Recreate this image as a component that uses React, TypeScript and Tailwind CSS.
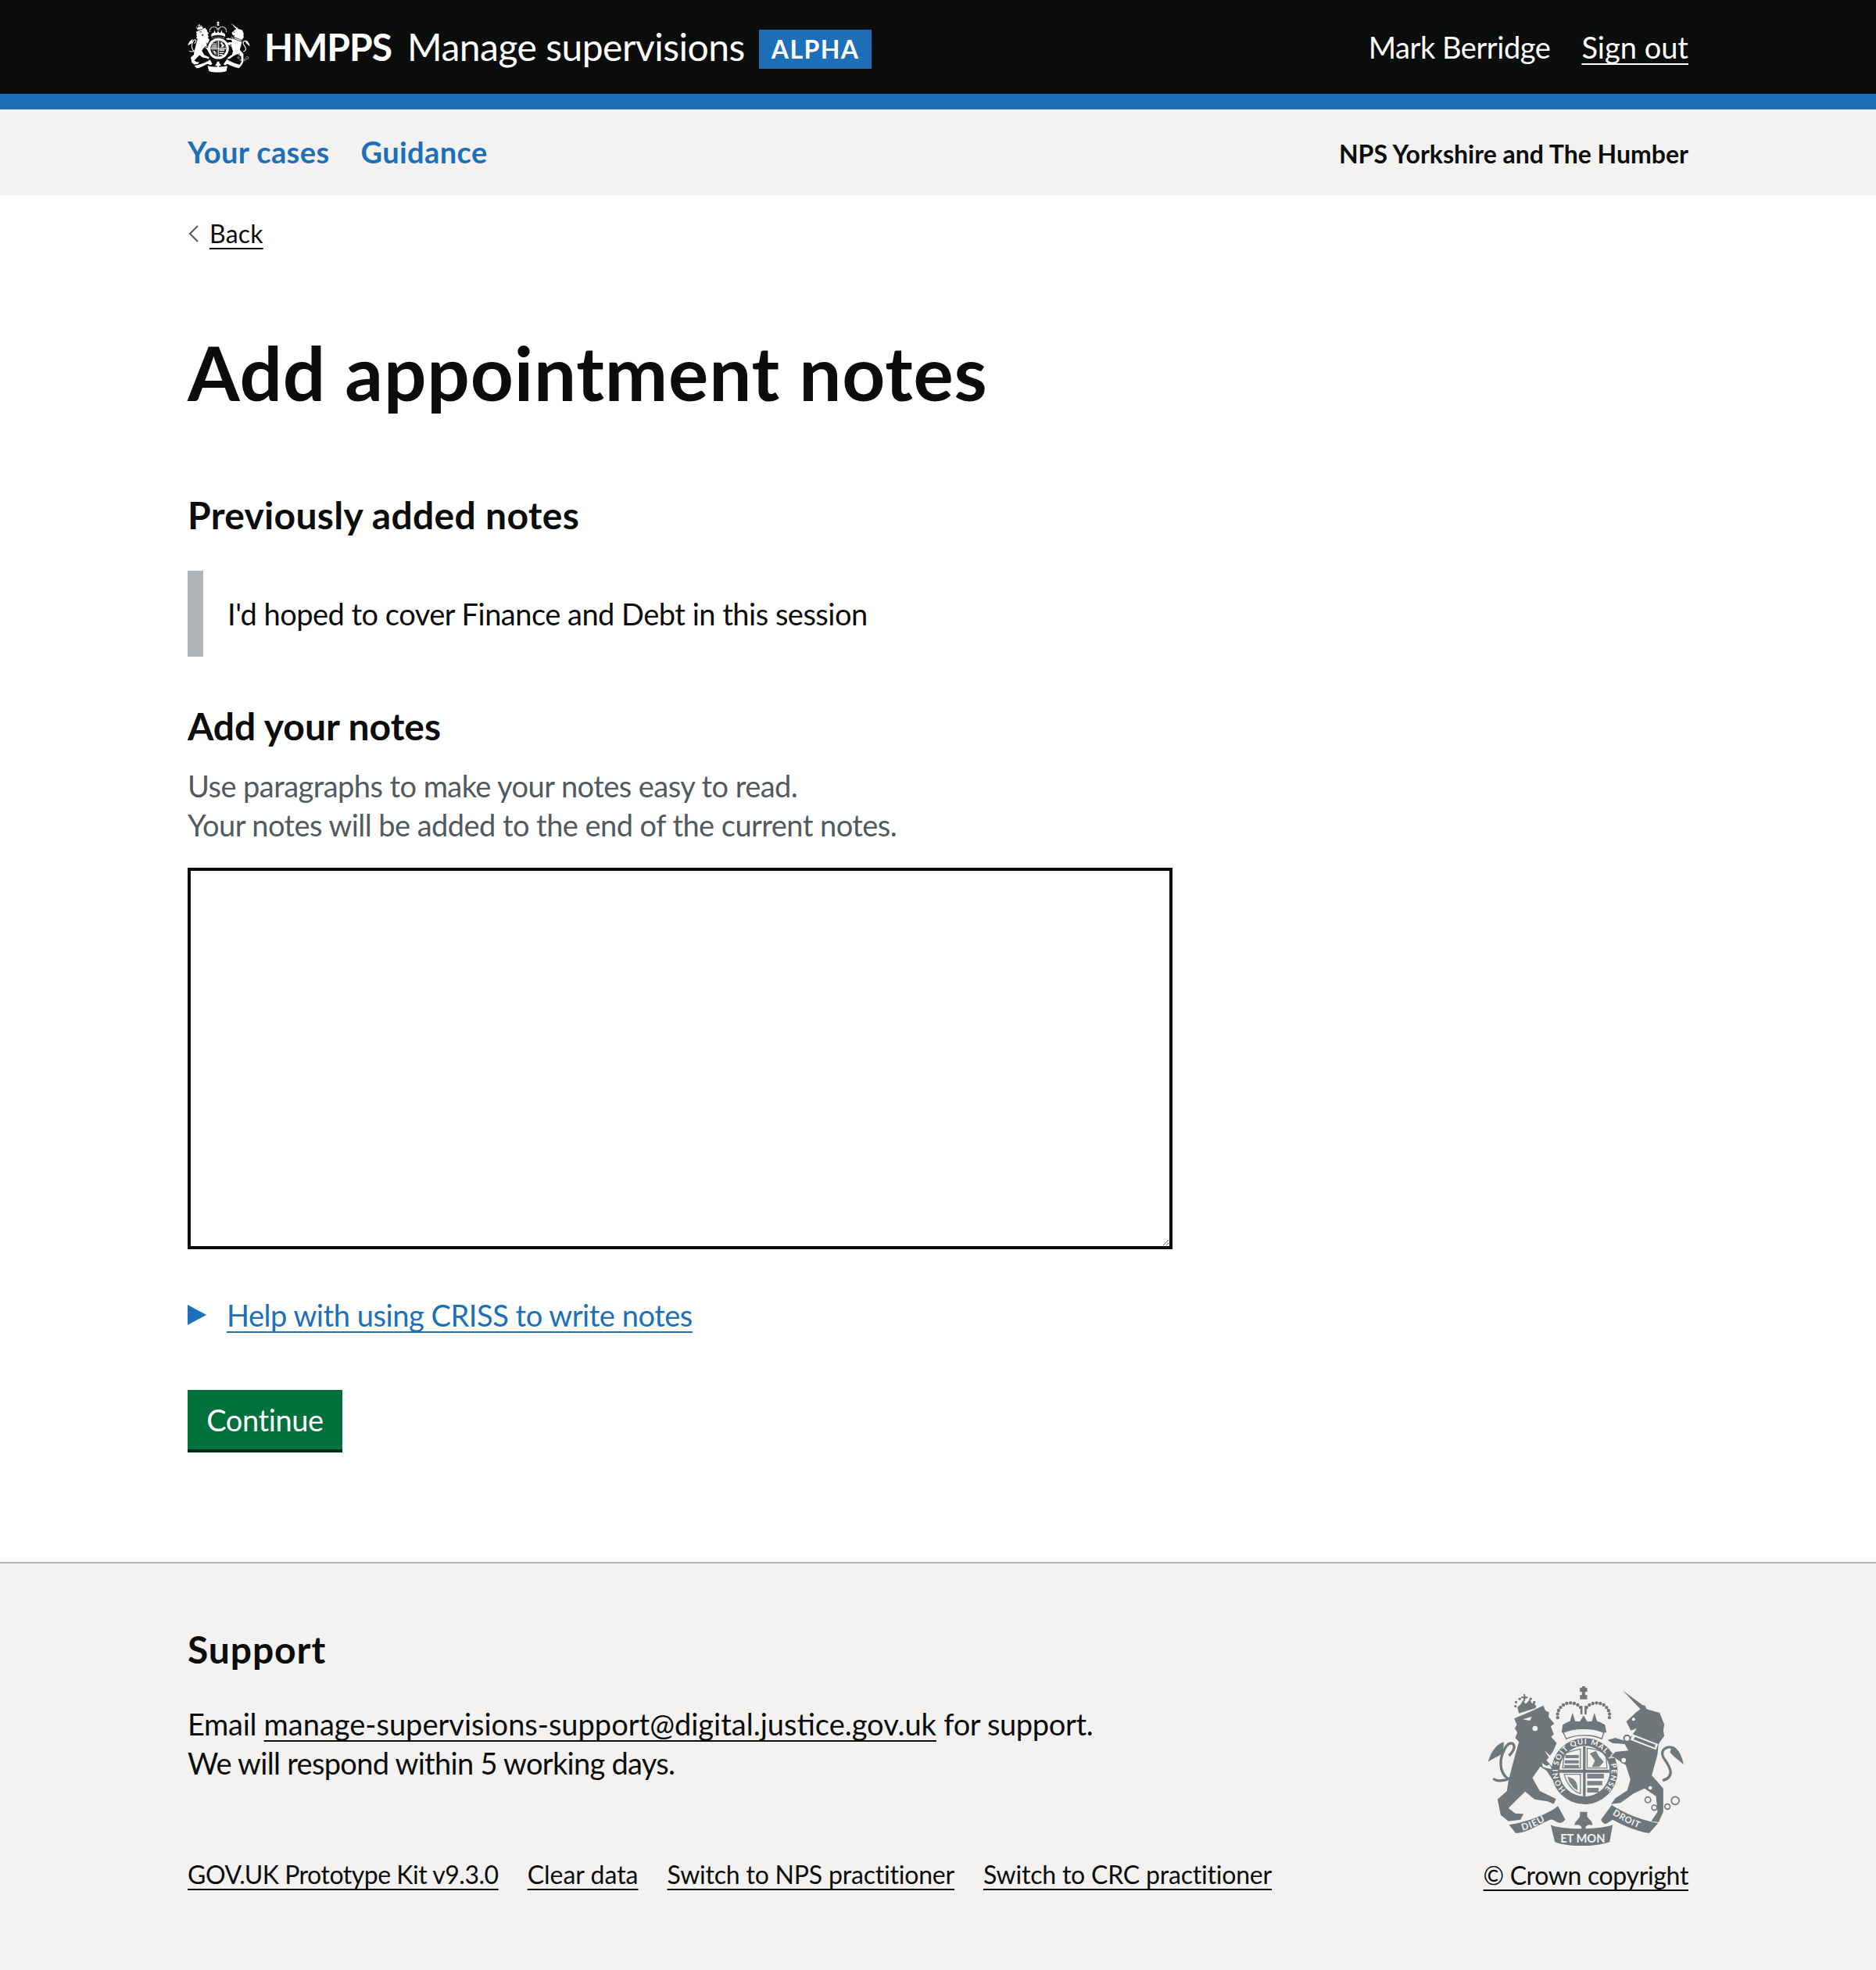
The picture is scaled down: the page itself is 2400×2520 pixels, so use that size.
import React from "react";

const font = "font-['Lato',sans-serif]";
const line = "underline decoration-2 underline-offset-[6px] [text-decoration-skip-ink:none]";

function arch(cx: number, cy: number, rx: number, ry: number, from: number, to: number, n: number) {
  const out: number[][] = [];
  for (let i = 0; i <= n; i++) {
    const a = ((from + ((to - from) * i) / n) * Math.PI) / 180;
    out.push([cx + rx * Math.cos(a), cy + ry * Math.sin(a)]);
  }
  return out;
}

function Crest({ className, fill, bg, text = true }: { className: string; fill: string; bg: string; text?: boolean }) {
  const crownDots = [...arch(388, 190, 50, 48, 170, 320, 9), ...arch(488, 190, 50, 48, 220, 370, 9)];
  const lionDots = arch(214, 150, 38, 28, 170, 370, 6);
  return (
    <svg viewBox="70 78 755 612" className={className} role="img" aria-label="Royal coat of arms">
      <g fill={fill}>
        {/* lion crown */}
        <path d="M184 158 L196 148 L206 132 L216 146 L232 128 L240 144 L250 140 L254 162 L190 182 Z" />
        <path d="M198 118 H208 V108 H214 V118 H224 V124 H214 V136 H208 V124 H198 Z" />
        {lionDots.map(([x, y], i) => <circle key={i} cx={x} cy={y} r="5" />)}
        {/* lion */}
        <path d="M172 202 L232 176 L284 152 L292 172 L306 178 L304 196 L326 222 L312 232 L324 262 L314 272 L335 296 L320 330 L296 362 L322 392 L336 424 L320 438 L296 402 L272 386 L242 430 L270 480 L332 510 L324 530 L300 520 L250 512 L214 482 L176 520 L150 546 L176 566 L208 568 L196 590 L150 596 L120 572 L108 512 L144 480 L150 440 L168 370 L190 292 L176 276 L184 256 L174 240 L182 226 Z" />
        <circle cx="252" cy="240" r="10" fill={bg} />
        <path d="M205 205 L240 195 L232 210 Z" fill={bg} />
        <path d="M288 325 L330 362 L320 374 Z" fill={bg} />
        <path d="M278 372 L296 384 L308 378 L316 396 L296 392 L282 388 Z" fill={bg} />
        {/* unicorn */}
        <path d="M588 94 L664 150 L674 152 L680 166 L700 172 L730 180 L748 225 L744 250 L748 268 L726 300 L722 340 L700 420 L744 470 L744 560 L726 600 L698 596 L722 560 L716 500 L672 470 L630 490 L580 526 L544 530 L560 508 L606 478 L618 436 L600 380 L546 345 L560 330 L610 325 L596 300 L548 296 L530 284 L560 276 L604 290 L628 262 L642 240 L620 248 L602 214 L640 178 L656 166 Z" />
        <circle cx="605" cy="278" r="12" fill={bg} stroke={fill} strokeWidth="6" />
        <circle cx="592" cy="362" r="11" fill={bg} stroke={fill} strokeWidth="5" />
        <path d="M626 262 L724 300 L716 322 L618 284 Z" fill={bg} />
        <path d="M636 272 L714 302 L712 314 L630 282 Z" />
        <circle cx="720" cy="432" r="7" fill={bg} />
        <circle cx="694" cy="468" r="7" fill={bg} />
        <circle cx="630" cy="205" r="6" fill={bg} />
        {/* crown */}
        <path d="M424 84 H432 V78 H444 V84 H452 V100 H444 V112 H452 V128 H424 V112 H432 V100 H424 Z" />
        <path d="M426 154 H434 V186 H426 Z M442 154 H450 V186 H442 Z" />
        <path d="M358 226 L376 216 L386 212 L396 180 L406 212 L424 214 L438 190 L452 214 L470 212 L480 180 L490 212 L502 216 L520 226 L526 256 H354 Z" />
        {crownDots.map(([x, y], i) => <circle key={i} cx={x} cy={y} r="6.5" />)}
        {/* shield */}
        <circle cx="442" cy="404" r="127" />
        <circle cx="442" cy="404" r="97" fill={bg} />
        <g opacity=".9">
          <path d="M364 335 L426 318 V392 H358 Z" fill="none" stroke={fill} strokeWidth="4" />
          <path d="M368 342 H420 V354 H368 Z M366 362 H420 V374 H366 Z M364 380 H420 V390 H364 Z" />
          <path d="M452 316 C 478 318 510 326 524 342 L528 392 H452 Z" fill="none" stroke={fill} strokeWidth="4" />
          <path d="M462 336 L486 326 L496 346 L516 368 L498 388 L470 388 L482 364 Z" />
          <path d="M364 416 H426 V490 C 396 482 372 450 364 416 Z" fill="none" stroke={fill} strokeWidth="4" />
          <path d="M376 426 C 404 428 418 450 414 478 L400 468 L384 446 Z" />
          <path d="M452 414 H516 V432 H452 Z M452 442 H510 V458 H452 Z M452 468 H496 V486 H452 Z" />
        </g>
        <path d="M436 308 H446 V500 H436 Z M345 398 H538 V410 H345 Z" />
        <path d="M360 256 C 400 236 480 236 516 256 L 508 280 C 470 262 410 262 372 280 Z" fill={bg} stroke={fill} strokeWidth="4" />
        {/* fleur */}
        <path d="M424 560 H452 V578 C 462 592 472 596 472 612 C 460 608 452 610 446 618 L 446 640 L 430 640 L 430 618 C 424 610 416 608 404 612 C 404 596 416 592 424 578 Z" />
        {/* tails */}
        <path d="M168 425 C 140 442 104 446 92 432 M150 435 C 108 405 118 350 135 320 C 145 295 170 288 172 310 C 172 325 162 335 152 345" fill="none" stroke={fill} strokeWidth="10" />
        <path d="M132 292 C 96 304 80 340 72 368 C 94 352 116 346 130 332 Z" />
        <path d="M742 440 C 792 424 770 388 745 352 C 728 322 760 302 788 318" fill="none" stroke={fill} strokeWidth="10" />
        <path d="M776 308 C 800 312 814 340 822 378 C 804 362 786 350 770 332 Z" />
        {/* chain */}
        {[[685, 514, 11], [710, 544, 10], [760, 540, 10], [790, 517, 15]].map(([x, y, r]) => (
          <circle key={x} cx={x} cy={y} r={r} fill="none" stroke={fill} strokeWidth="5" />
        ))}
        {/* ribbons */}
        <path d="M152 610 C 220 600 300 570 340 538 L 368 590 C 340 620 330 585 310 590 C 260 612 220 640 178 642 Z" />
        <path d="M546 534 C 590 562 650 590 724 604 L 690 642 C 640 634 590 612 550 590 C 530 600 520 620 505 590 Z" />
        <path d="M312 610 C 350 630 500 630 550 610 L 538 676 C 480 696 380 696 328 676 Z" />
      </g>
      {text && (
        <g fill={bg} fontFamily="Lato, sans-serif" fontWeight="700">
          <defs>
            <path id="ring" d="M 370 476 A 103 103 0 1 1 515 476" />
            <path id="dieu" d="M 204 632 C 245 622 285 600 318 578" />
            <path id="droit" d="M 548 570 C 585 593 625 614 668 630" />
          </defs>
          <text fontSize="29" textLength="480"><textPath href="#ring">HONI SOIT QUI MAL Y PENSE</textPath></text>
          <text fontSize="36" letterSpacing="3"><textPath href="#dieu">DIEU</textPath></text>
          <text fontSize="34" letterSpacing="2"><textPath href="#droit">DROIT</textPath></text>
          <text x="349" y="677" fontSize="44">ET MON</text>
        </g>
      )}
    </svg>
  );
}

export default function App() {
  return (
    <div className={`${font} min-h-[2520px] flex flex-col bg-white text-[#0b0c0c] text-[38px] leading-[50px]`}>
      <header className="h-[140px] bg-[#0b0c0c] border-b-[20px] border-[#1d70b8] text-white">
        <div className="w-[1920px] mx-auto h-full flex items-center justify-between">
          <div className="flex items-center">
            <Crest className="w-[80px] h-[70px] mr-[18px]" fill="#ffffff" bg="#0b0c0c" text={false} />
            <span className="font-bold text-[48px] mr-[20px] tracking-[-1px]">HMPPS</span>
            <span className="text-[48px] mr-[18px] tracking-[-0.5px]">Manage supervisions</span>
            <span className="mt-[6px] bg-[#1d70b8] font-bold text-[32px] leading-[50px] h-[50px] px-[16px] tracking-[1.4px]">ALPHA</span>
          </div>
          <div className="flex items-center gap-[40px]">
            <span className="tracking-[-0.45px]">Mark Berridge</span>
            <a className={line}>Sign out</a>
          </div>
        </div>
      </header>

      <nav className="h-[110px] bg-[#f3f2f1]">
        <div className="w-[1920px] mx-auto h-full flex items-center justify-between">
          <div className="flex gap-[40px] font-bold text-[#1d70b8] tracking-[0.4px] mt-[-3px]">
            <a>Your cases</a>
            <a>Guidance</a>
          </div>
          <div className="font-bold text-[32px] mt-[3px]">NPS Yorkshire and The Humber</div>
        </div>
      </nav>

      <main className="w-[1920px] mx-auto grow">
        <div className="mt-[29px] flex items-center h-[40px] text-[32px]">
          <svg viewBox="0 0 16 24" className="w-[16px] h-[24px] mr-[12px]" fill="none" stroke="#505a5f" strokeWidth="2">
            <path d="M13 2 L3 12 L13 22" />
          </svg>
          <a className={`${line} tracking-[0.2px]`}>Back</a>
        </div>

        <h1 className="mt-[107px] font-bold text-[96px] leading-[100px] tracking-[0.85px]">Add appointment notes</h1>

        <h2 className="mt-[103px] font-bold text-[48px] leading-[60px] tracking-[0.3px]">Previously added notes</h2>

        <div className="mt-[41px] border-l-[20px] border-[#b1b4b6] pl-[31px] py-[30px] tracking-[-0.5px]">I'd hoped to cover Finance and Debt in this session</div>

        <h2 className="mt-[59px] font-bold text-[48px] leading-[60px]">Add your notes</h2>
        <p className="mt-[21px] text-[#505a5f] tracking-[-0.55px]">
          Use paragraphs to make your notes easy to read.
          <br />
          Your notes will be added to the end of the current notes.
        </p>

        <textarea className="block mt-[30px] w-[1260px] h-[488px] border-4 border-[#0b0c0c] bg-white" />

        <details className="mt-[59px]">
          <summary className="flex items-center list-none text-[#1d70b8]">
            <svg viewBox="0 0 24 26" className="w-[24px] h-[26px] mr-[26px]" fill="#1d70b8">
              <path d="M0 0 L24 13 L0 26 Z" />
            </svg>
            <span className={`${line} tracking-[-0.45px]`}>Help with using CRISS to write notes</span>
          </summary>
        </details>

        <button className="block mt-[71px] w-[198px] h-[80px] pb-[4px] bg-[#00703c] text-white tracking-[-0.4px] shadow-[inset_0_-4px_0_#002d18]">Continue</button>
      </main>

      <footer className="h-[522px] mt-[140px] bg-[#f3f2f1] border-t-2 border-[#b1b4b6]">
        <div className="w-[1920px] mx-auto flex justify-between">
          <div>
            <h2 className="mt-[80px] font-bold text-[48px] leading-[60px] tracking-[0.9px]">Support</h2>
            <p className="mt-[40px]">
              <span className="tracking-[-0.3px]">Email </span><a className={line}>manage-supervisions-support@digital.justice.gov.uk</a><span className="tracking-[-0.35px]"> for support.</span>
              <br />
              <span className="tracking-[-0.7px]">We will respond within 5 working days.</span>
            </p>
            <ul className="mt-[98px] flex gap-[37px] text-[32px] leading-[40px]">
              <li><a className={`${line} tracking-[-0.48px]`}>GOV.UK Prototype Kit v9.3.0</a></li>
              <li><a className={line}>Clear data</a></li>
              <li><a className={`${line} tracking-[-0.2px]`}>Switch to NPS practitioner</a></li>
              <li><a className={`${line} tracking-[-0.2px]`}>Switch to CRC practitioner</a></li>
            </ul>
          </div>
          <div className="flex flex-col items-end">
            <Crest className="mt-[157px] mr-[5px] w-[252px] h-[204px]" fill="#6f777b" bg="#f3f2f1" />
            <a className={`mt-[18px] text-[32px] leading-[40px] tracking-[-0.35px] ${line}`}>© Crown copyright</a>
          </div>
        </div>
      </footer>
    </div>
  );
}
